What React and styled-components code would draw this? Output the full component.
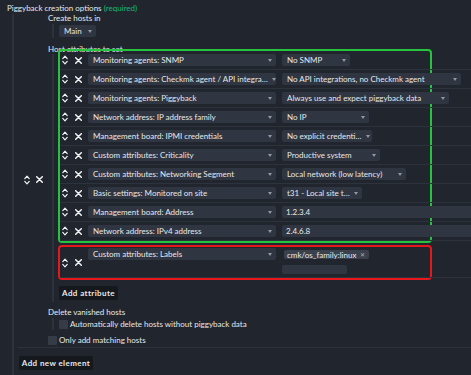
import styled, { createGlobalStyle } from "styled-components";

const colors = {
  bg: "#21262e",
  line: "#2d333d",
  field: "#2f3541",
  tag: "#3a414d",
  text: "#e6e8eb",
  arrow: "#9299a3",
  button: "#15181d",
  check: "#363c47",
  required: "#17b877",
  green: "#25c33e",
  red: "#e8171d",
};

const GlobalStyle = createGlobalStyle`
  html, body {
    margin: 0;
    padding: 0;
    background: ${colors.bg};
    overflow: hidden;
  }
  body {
    font-family: Lato, "Noto Sans", sans-serif;
    font-size: 8px;
    color: ${colors.text};
  }
`;

const Page = styled.div`
  display: flex;
  flex-direction: column;
  width: 471px;
  height: 375px;
  overflow: hidden;
`;

const Title = styled.div`
  height: 11px;
  padding: 3px 0 0 7px;
  line-height: 11px;
  white-space: nowrap;
`;

const Required = styled.span`
  color: ${colors.required};
`;

const Block = styled.div`
  flex: 1;
  margin-left: 12px;
  padding-left: 4px;
  border-left: 2px solid ${colors.line};
`;

const Entry = styled.div`
  display: flex;
  padding-bottom: 2px;
  border-bottom: 1px solid ${colors.line};
`;

const EntryControls = styled.div`
  display: flex;
  align-items: center;
  justify-content: center;
  gap: 6px;
  width: 30px;
  flex-shrink: 0;
`;

const EntryBody = styled.div`
  flex: 1;
  min-width: 0;
`;

const FieldLabel = styled.div`
  margin-top: ${(p) => p.$top || 0}px;
  line-height: 9px;
  white-space: nowrap;
`;

const SubValue = styled.div`
  margin: ${(p) => p.$top || 0}px 0 0 4px;
  padding: 1px 0 ${(p) => p.$bottom || 1}px 5px;
  border-left: 2px solid ${colors.line};
`;

const Highlight = styled.div`
  position: relative;
  box-sizing: border-box;
  width: 374px;
  margin: ${(p) => p.$top}px 0 0 -1px;
  border: 2px solid ${(p) => p.$color};
  border-radius: 4px;
`;

const Row = styled.div`
  display: flex;
  align-items: ${(p) => (p.$tall ? "flex-start" : "center")};
  box-sizing: border-box;
  width: 430px;
  height: ${(p) => (p.$tall ? 31 : 19)}px;
  padding: ${(p) => (p.$tall ? "1px 0 0 2px" : "0 0 0 2px")};
  border-bottom: 1px solid ${colors.line};
`;

const RowIcons = styled.div`
  display: flex;
  align-items: center;
  gap: 7px;
  align-self: center;
  margin-right: 6px;
`;

const Select = styled.div`
  display: flex;
  align-items: center;
  justify-content: space-between;
  box-sizing: border-box;
  flex-shrink: 0;
  width: ${(p) => p.$width}px;
  height: 12px;
  margin-right: ${(p) => p.$gap || 0}px;
  padding: 0 4px 0 5px;
  background: ${colors.field};
  border-radius: 2px;
  white-space: nowrap;
  overflow: hidden;
`;

const Caret = styled.span`
  flex-shrink: 0;
  margin-left: 4px;
  border-left: 2.5px solid transparent;
  border-right: 2.5px solid transparent;
  border-top: 3px solid ${colors.arrow};
`;

const TextInput = styled.div`
  box-sizing: border-box;
  flex-shrink: 0;
  width: ${(p) => p.$width}px;
  height: ${(p) => p.$height || 12}px;
  margin-top: ${(p) => p.$top || 0}px;
  padding-left: 4px;
  line-height: ${(p) => p.$height || 12}px;
  background: ${colors.field};
  border-radius: 2px;
`;

const LabelColumn = styled.div`
  display: flex;
  flex-direction: column;
`;

const Tag = styled.div`
  display: flex;
  align-items: center;
  gap: 4px;
  height: 9px;
  margin: 2px 0 0 2px;
  padding: 0 4px 0 3px;
  background: ${colors.tag};
  border-radius: 2px;
  white-space: nowrap;
`;

const TagClose = styled.span`
  font-size: 6px;
  color: #aab0b8;
`;

const Button = styled.div`
  display: flex;
  align-items: center;
  justify-content: center;
  width: ${(p) => p.$width}px;
  height: 14px;
  margin-top: ${(p) => p.$top}px;
  margin-left: ${(p) => p.$left || 0}px;
  background: ${colors.button};
  border-radius: 2px;
  font-weight: 700;
  letter-spacing: 0.4px;
  white-space: nowrap;
`;

const CheckLine = styled.div`
  display: flex;
  align-items: center;
  gap: 2px;
  margin-top: ${(p) => p.$top || 0}px;
  white-space: nowrap;
`;

const Checkbox = styled.span`
  width: 9px;
  height: 9px;
  flex-shrink: 0;
  background: ${colors.check};
  border-radius: 1px;
`;

function MoveIcon() {
  return (
    <svg width="6" height="10" viewBox="0 0 6 10">
      <path
        d="M0.8 3.6 L3 1.2 L5.2 3.6 M0.8 6.4 L3 8.8 L5.2 6.4"
        fill="none"
        stroke="#f2f3f5"
        strokeWidth="1.2"
        strokeLinecap="round"
        strokeLinejoin="round"
      />
    </svg>
  );
}

function CloseIcon() {
  return (
    <svg width="7" height="7" viewBox="0 0 7 7">
      <path
        d="M0.7 0.7 L6.3 6.3 M6.3 0.7 L0.7 6.3"
        stroke="#f2f3f5"
        strokeWidth="1.5"
        strokeLinecap="round"
      />
    </svg>
  );
}

function Dropdown({ width, gap, children }) {
  return (
    <Select $width={width} $gap={gap}>
      <span>{children}</span>
      <Caret />
    </Select>
  );
}

const attributes = [
  { name: "Monitoring agents: SNMP", value: "No SNMP", width: 68 },
  {
    name: "Monitoring agents: Checkmk agent / API integra…",
    value: "No API integrations, no Checkmk agent",
    width: 179,
  },
  {
    name: "Monitoring agents: Piggyback",
    value: "Always use and expect piggyback data",
    width: 167,
  },
  { name: "Network address: IP address family", value: "No IP", width: 87 },
  {
    name: "Management board: IPMI credentials",
    value: "No explicit credenti…",
    width: 90,
  },
  {
    name: "Custom attributes: Criticality",
    value: "Productive system",
    width: 98,
  },
  {
    name: "Custom attributes: Networking Segment",
    value: "Local network (low latency)",
    width: 124,
  },
  {
    name: "Basic settings: Monitored on site",
    value: "t31 - Local site t…",
    width: 80,
  },
  { name: "Management board: Address", value: "1.2.3.4", input: true },
  { name: "Network address: IPv4 address", value: "2.4.6.8", input: true },
];

function AttributeRow({ attr }) {
  return (
    <Row>
      <RowIcons>
        <MoveIcon />
        <CloseIcon />
      </RowIcons>
      <Dropdown width={188} gap={6}>
        {attr.name}
      </Dropdown>
      {attr.input ? (
        <TextInput $width={200}>{attr.value}</TextInput>
      ) : (
        <Dropdown width={attr.width}>{attr.value}</Dropdown>
      )}
    </Row>
  );
}

export default function App() {
  return (
    <Page>
      <GlobalStyle />
      <Title>
        Piggyback creation options <Required>(required)</Required>
      </Title>

      <Block>
        <Entry>
          <EntryControls>
            <MoveIcon />
            <CloseIcon />
          </EntryControls>

          <EntryBody>
            <FieldLabel>Create hosts in</FieldLabel>
            <SubValue $top={1}>
              <Dropdown width={37}>Main</Dropdown>
            </SubValue>

            <FieldLabel $top={7}>Host attributes to set</FieldLabel>
            <SubValue $bottom={2}>
              <Highlight $color={colors.green} $top={-6}>
                {attributes.map((attr) => (
                  <AttributeRow key={attr.name} attr={attr} />
                ))}
              </Highlight>

              <Highlight $color={colors.red} $top={2}>
                <Row $tall>
                  <RowIcons>
                    <MoveIcon />
                    <CloseIcon />
                  </RowIcons>
                  <Dropdown width={188} gap={6}>
                    Custom attributes: Labels
                  </Dropdown>
                  <LabelColumn>
                    <Tag>
                      cmk/os_family:linux
                      <TagClose>✕</TagClose>
                    </Tag>
                    <TextInput $width={65} $height={9} $top={6} />
                  </LabelColumn>
                </Row>
              </Highlight>

              <Button $width={59} $top={6}>
                Add attribute
              </Button>
            </SubValue>

            <FieldLabel $top={6}>Delete vanished hosts</FieldLabel>
            <SubValue $top={1}>
              <CheckLine>
                <Checkbox />
                Automatically delete hosts without piggyback data
              </CheckLine>
            </SubValue>

            <CheckLine $top={5}>
              <Checkbox />
              Only add matching hosts
            </CheckLine>
          </EntryBody>
        </Entry>

        <Button $width={74} $top={8} $left={1}>
          Add new element
        </Button>
      </Block>
    </Page>
  );
}
